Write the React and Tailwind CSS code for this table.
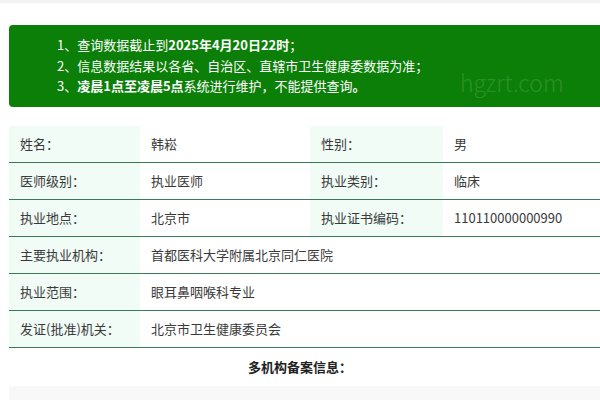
export default function App() {
  const rows = [
    { a: '姓名：', b: '韩崧', c: '性别：', d: '男' },
    { a: '医师级别：', b: '执业医师', c: '执业类别：', d: '临床' },
    { a: '执业地点：', b: '北京市', c: '执业证书编码：', d: '110110000000990' },
    { a: '主要执业机构：', b: '首都医科大学附属北京同仁医院' },
    { a: '执业范围：', b: '眼耳鼻咽喉科专业' },
    { a: '发证(批准)机关：', b: '北京市卫生健康委员会' },
  ];

  return (
    <div
      className="w-[600px] h-[400px] overflow-hidden bg-white text-[13px] text-[#3a3a3a]"
      style={{ fontFamily: '"Microsoft YaHei", "Noto Sans CJK SC", "Noto Sans", sans-serif' }}
    >
      <div className="h-[3px] bg-[#f3f3f3]" />
      <div className="pl-[9px] pt-[22px]">
        <div className="relative h-[82px] rounded-l-[4px] bg-[#0b7f08] pl-[48px] pt-[10px] text-white leading-[20.5px] overflow-hidden">
          {/* faint watermark */}
          <div className="absolute left-[451px] top-[46px] text-[23px] leading-none text-white/15 font-light">hgzrt.com</div>
          <div className="relative">
            1、查询数据截止到<span className="font-bold">2025年4月20日22时</span>；
          </div>
          <div className="relative">2、信息数据结果以各省、自治区、直辖市卫生健康委数据为准；</div>
          <div className="relative">
            3、<span className="font-bold">凌晨1点至凌晨5点</span>系统进行维护，不能提供查询<span className="font-bold">。</span>
          </div>
        </div>

        <div className="mt-[19px]">
          {rows.map((r, i) => (
            <div key={i} className="flex h-[37px] border-b border-[#3b7a58]">
              <div className="w-[131px] bg-[#f0fcf5] pl-[11px] flex items-center">{r.a}</div>
              {r.c ? (
                <>
                  <div className="w-[170px] pl-[11px] flex items-center">{r.b}</div>
                  <div className="w-[133px] bg-[#f0fcf5] pl-[11px] flex items-center">{r.c}</div>
                  <div className="flex-1 pl-[11px] flex items-center">{r.d}</div>
                </>
              ) : (
                <div className="flex-1 pl-[11px] flex items-center">{r.b}</div>
              )}
            </div>
          ))}
        </div>

        <div className="h-[38px] flex items-center justify-center font-bold text-[#222] pr-[9px]">
          多机构备案信息：
        </div>
        <div className="h-[20px] bg-[#f8f8f8]" />
      </div>
    </div>
  );
}
